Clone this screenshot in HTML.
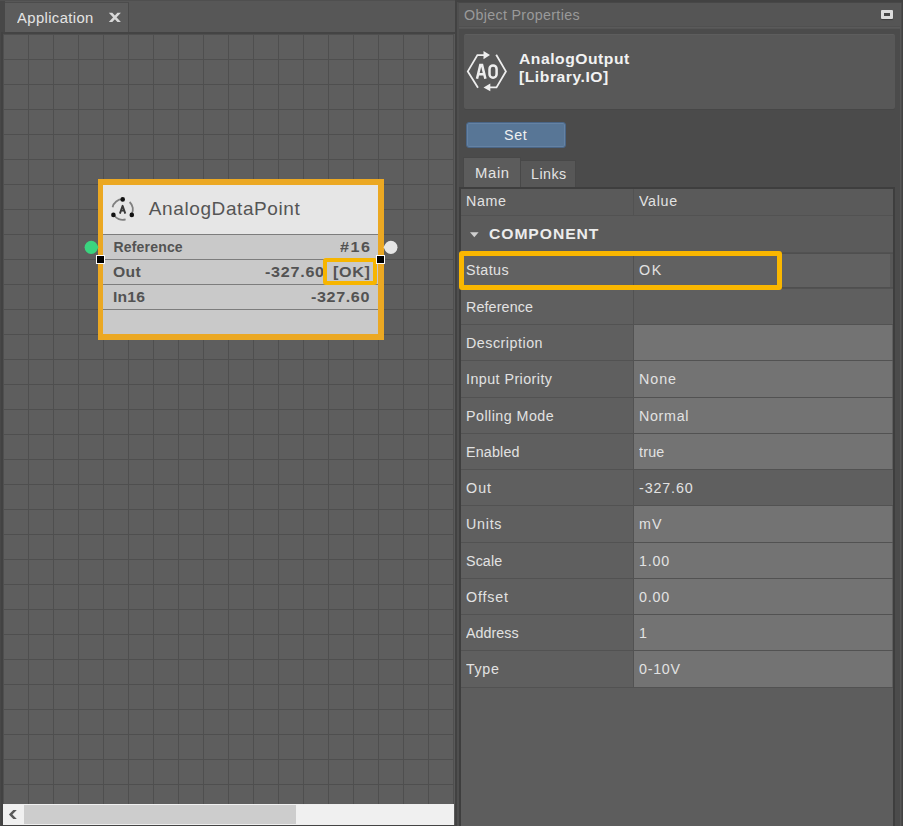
<!DOCTYPE html>
<html><head><meta charset="utf-8"><style>
*{margin:0;padding:0;box-sizing:border-box}
html,body{width:903px;height:826px;overflow:hidden;background:#474747;font-family:"Liberation Sans",sans-serif}
.a{position:absolute}
.t{position:absolute;white-space:pre;line-height:1}
</style></head><body>
<div class="a" style="left:0;top:0;width:456px;height:826px;background:#474747"></div>
<div class="a" style="left:0;top:0;width:456px;height:1px;background:#4f4f4f"></div>
<div class="a" style="left:5px;top:1px;width:451px;height:31px;background:#575757"></div>
<div class="a" style="left:5px;top:2px;width:124px;height:1px;background:#4c4c4c"></div>
<div class="a" style="left:5px;top:3px;width:124px;height:29px;background:#5c5c5c"></div>
<div class="a" style="left:128px;top:3px;width:1px;height:30px;background:#4a4a4a"></div>
<div class="t" style="left:16.5px;top:10.7px;font-size:14px;color:#e4e4e4;letter-spacing:0.35px;transform:scaleX(1.06);transform-origin:0 0;">Application</div>
<svg class="a" style="left:108px;top:12px" width="14" height="11" viewBox="0 0 14 11"><path d="M0.8 0.8 H4.3 L12.9 10 H9.4 Z M9.4 0.8 H12.9 L4.3 10 H0.8 Z" fill="#d8d8d8"/></svg>
<div class="a" style="left:3px;top:32px;width:453px;height:2px;background:#444"></div>
<div class="a" style="left:1px;top:32px;width:2px;height:794px;background:#424242"></div>
<div class="a" style="left:3px;top:34px;width:452px;height:770px;background-color:#5e5e5e;background-image:linear-gradient(#4f4f4f 1px,transparent 1px),linear-gradient(90deg,#4f4f4f 1px,transparent 1px);background-size:25px 25px;background-position:0 -25px,0 0"></div>
<div class="a" style="left:454px;top:34px;width:1px;height:791px;background:#5a5a5a"></div>
<div class="a" style="left:3px;top:804px;width:451px;height:21px;background:#f0f0f0"></div>
<div class="a" style="left:24px;top:805px;width:272px;height:19px;background:#cdcdcd"></div>
<svg class="a" style="left:8px;top:809px" width="10" height="11" viewBox="0 0 10 11"><path d="M5.3 1.1 H8.8 L4.4 5.5 L8.8 9.9 H5.3 L0.9 5.5 Z" fill="#5a5a5a"/></svg>
<div class="a" style="left:3px;top:825px;width:452px;height:1px;background:#444"></div>
<div class="a" style="left:98px;top:179px;width:286px;height:161px;background:#eba823"></div>
<div class="a" style="left:103px;top:185px;width:275px;height:49px;background:#e6e6e6"></div>
<div class="a" style="left:103px;top:234px;width:275px;height:25px;background:#c9c9c9;border-top:1px solid #7d7d7d"></div>
<div class="a" style="left:103px;top:259px;width:275px;height:25px;background:#c9c9c9;border-top:1px solid #7d7d7d"></div>
<div class="a" style="left:103px;top:284px;width:275px;height:25px;background:#c9c9c9;border-top:1px solid #7d7d7d"></div>
<div class="a" style="left:103px;top:309px;width:275px;height:25px;background:#c9c9c9;border-top:1px solid #7d7d7d"></div>
<svg class="a" style="left:108px;top:194px" width="30" height="30" viewBox="0 0 30 30">
<g fill="none" stroke="#808080" stroke-width="1.8">
<path d="M14.6 5.2 A10.3 10.3 0 0 0 4.57 13.18"/>
<path d="M23.52 20.65 A10.3 10.3 0 0 0 21.62 7.97"/>
<path d="M5.68 20.65 A10.3 10.3 0 0 0 17.61 25.35"/>
</g>
<circle cx="14.7" cy="5.4" r="2.3" fill="#111"/><circle cx="5.4" cy="20.9" r="2.3" fill="#111"/><circle cx="23.8" cy="20.9" r="2.3" fill="#111"/>
<path d="M11.9 19.6 L14.6 11.8 L17.3 19.6 M12.9 16.6 H16.3" fill="none" stroke="#3a3a3a" stroke-width="1.9" stroke-linejoin="round"/>
</svg>
<div class="t" style="left:148.8px;top:199.2px;font-size:19px;color:#555;letter-spacing:0.6px;">AnalogDataPoint</div>
<div class="t" style="left:113.5px;top:239.6px;font-size:14px;color:#535353;letter-spacing:0.18px;font-weight:bold;">Reference</div>
<div class="t" style="left:113.4px;top:264.6px;font-size:14px;color:#535353;letter-spacing:0.37px;font-weight:bold;transform:scaleX(1.12);transform-origin:0 0;">Out</div>
<div class="t" style="left:113.4px;top:289.6px;font-size:14px;color:#535353;letter-spacing:0.14px;font-weight:bold;transform:scaleX(1.12);transform-origin:0 0;">In16</div>
<div class="t" style="left:264.5px;top:264.6px;font-size:14px;color:#535353;letter-spacing:0.64px;font-weight:bold;transform:scaleX(1.15);transform-origin:0 0;">-327.60</div>
<div class="t" style="left:310.5px;top:289.6px;font-size:14px;color:#535353;letter-spacing:0.55px;font-weight:bold;transform:scaleX(1.15);transform-origin:0 0;">-327.60</div>
<div class="t" style="left:332.6px;top:264.6px;font-size:14px;color:#535353;letter-spacing:0.6px;font-weight:bold;transform:scaleX(1.15);transform-origin:0 0;">[OK]</div>
<div class="t" style="left:339.5px;top:239.6px;font-size:14px;color:#535353;letter-spacing:1.3px;font-weight:bold;transform:scaleX(1.15);transform-origin:0 0;">#16</div>
<div class="a" style="left:323px;top:258px;width:54px;height:27px;border:4px solid #f7b500;border-radius:3px"></div>
<svg class="a" style="left:82px;top:238px" width="20" height="20" viewBox="0 0 20 20"><circle cx="9.2" cy="9.3" r="6.6" fill="#3ad47f"/><path d="M13.5 5.3 L16.6 9.3 L13.5 13.3 Z" fill="#3ad47f"/></svg>
<svg class="a" style="left:381px;top:238px" width="20" height="20" viewBox="0 0 20 20"><circle cx="9.9" cy="9.3" r="6.6" fill="#e6e6e6"/><path d="M5.6 5.3 L2.4 9.3 L5.6 13.3 Z" fill="#e6e6e6"/></svg>
<div class="a" style="left:96px;top:255px;width:9px;height:9px;background:#000;border:1px solid #fff"></div>
<div class="a" style="left:376px;top:255px;width:9px;height:9px;background:#000;border:1px solid #fff"></div>
<div class="a" style="left:455px;top:0;width:448px;height:826px;background:#424242"></div>
<div class="a" style="left:457px;top:2px;width:445px;height:824px;background:#4b4b4b;border-left:2px solid #4f4f4f;border-top:1px solid #474747"></div>
<div class="a" style="left:459px;top:3px;width:441px;height:26px;background:#555"></div>
<div class="a" style="left:459px;top:26px;width:441px;height:1px;background:#505050"></div>
<div class="a" style="left:459px;top:27px;width:441px;height:1px;background:#5a5a5a"></div>
<div class="a" style="left:900px;top:3px;width:1px;height:823px;background:#575757"></div>
<div class="t" style="left:463.6px;top:7.8px;font-size:14px;color:#9a9a9a;letter-spacing:0.32px;transform:scaleX(1.02);transform-origin:0 0;">Object Properties</div>
<div class="a" style="left:881px;top:10px;width:12px;height:9px;border:3px solid #dcdcdc;border-radius:1px;background:#464646;box-shadow:0 1px 1px #3c3c3c"></div>
<div class="a" style="left:464px;top:34px;width:431px;height:75px;background:#585858;border-radius:2px;box-shadow:0 1px 0 #474747;border-top:1px solid #5d5d5d"></div>
<svg class="a" style="left:462px;top:46px" width="50" height="50" viewBox="0 0 50 50">
<g fill="none" stroke="#eeeeee" stroke-width="1.8">
<path d="M22.5 9.1 H15.4 L5.8 25.4 L16 41.8"/>
<path d="M34.2 8.8 L43.9 25.4 L34.5 41.4 H27.5"/>
<path d="M15 32.8 L18.3 19.1 H20.1 L23.4 32.8 M16.4 28.2 H22" stroke-width="2.5" stroke-linejoin="miter"/>
<rect x="27.5" y="19.4" width="7.1" height="12.3" rx="3.5" stroke-width="2.5"/>
</g>
<path d="M21.5 5 L28 9.1 L21.5 13.2 Z" fill="#eeeeee"/>
<path d="M28.3 37.6 L21.5 41.4 L28.3 45.2 Z" fill="#eeeeee"/>
</svg>
<div class="t" style="left:519.0px;top:51.7px;font-size:14px;color:#f2f2f2;letter-spacing:0.47px;font-weight:bold;transform:scaleX(1.12);transform-origin:0 0;">AnalogOutput</div>
<div class="t" style="left:518.6px;top:69.9px;font-size:14px;color:#f2f2f2;letter-spacing:0.48px;font-weight:bold;transform:scaleX(1.12);transform-origin:0 0;">[Library.IO]</div>
<div class="a" style="left:466px;top:122px;width:100px;height:26px;background:#587696;border-radius:3px;border:1px solid #4a6687;box-shadow:inset 0 0 0 1px #6582a3"></div>
<div class="t" style="left:504.2px;top:128.0px;font-size:14px;color:#f0f0f0;letter-spacing:0.69px;transform:scaleX(1.02);transform-origin:0 0;">Set</div>
<div class="a" style="left:463px;top:157px;width:58px;height:31px;background:#5c5c5c;border:1px solid #484848;border-bottom:none"></div>
<div class="a" style="left:521px;top:160px;width:55px;height:28px;background:#575757;border:1px solid #484848;border-bottom:none;border-left:none"></div>
<div class="t" style="left:474.6px;top:165.7px;font-size:14px;color:#e4e4e4;letter-spacing:0.6px;transform:scaleX(1.06);transform-origin:0 0;">Main</div>
<div class="t" style="left:531.0px;top:166.9px;font-size:14px;color:#e4e4e4;letter-spacing:0.44px;transform:scaleX(1.02);transform-origin:0 0;">Links</div>
<div class="a" style="left:459px;top:187px;width:436px;height:639px;background:#3e3e3e"></div>
<div class="a" style="left:461px;top:189px;width:432px;height:637px;background:#5d5d5d"></div>
<div class="a" style="left:461px;top:189px;width:432px;height:26px;background:#5a5a5a"></div>
<div class="t" style="left:465.7px;top:194.3px;font-size:14px;color:#e2e2e2;letter-spacing:0.58px;transform:scaleX(1.02);transform-origin:0 0;">Name</div>
<div class="t" style="left:639.2px;top:194.4px;font-size:14px;color:#e2e2e2;letter-spacing:0.64px;transform:scaleX(1.02);transform-origin:0 0;">Value</div>
<div class="a" style="left:633px;top:189px;width:1px;height:26px;background:#525252"></div>
<div class="a" style="left:461px;top:215px;width:432px;height:1px;background:#525252"></div>
<div class="a" style="left:461px;top:216px;width:432px;height:36px;background:#5b5b5b"></div>
<svg class="a" style="left:470px;top:232px" width="9" height="6"><path d="M0 0.3 H8.6 L4.3 5.3 Z" fill="#d0d0d0"/></svg>
<div class="t" style="left:489.4px;top:226.7px;font-size:14px;color:#ececec;letter-spacing:0.83px;font-weight:bold;transform:scaleX(1.12);transform-origin:0 0;">COMPONENT</div>
<div class="a" style="left:461px;top:252px;width:432px;height:1px;background:#525252"></div>
<div class="a" style="left:461px;top:253px;width:432px;height:35px;background:#616161"></div>
<div class="a" style="left:633px;top:253px;width:1px;height:35px;background:#525252"></div>
<div class="t" style="left:465.7px;top:262.8px;font-size:14px;color:#e2e2e2;letter-spacing:0.4px;transform:scaleX(1.02);transform-origin:0 0;">Status</div>
<div class="t" style="left:638.8px;top:262.8px;font-size:14px;color:#e2e2e2;letter-spacing:1.5px;transform:scaleX(1.02);transform-origin:0 0;">OK</div>
<div class="a" style="left:461px;top:288px;width:432px;height:1px;background:#525252"></div>
<div class="a" style="left:461px;top:289px;width:432px;height:35px;background:#5f5f5f"></div>
<div class="a" style="left:633px;top:289px;width:1px;height:35px;background:#525252"></div>
<div class="t" style="left:466.2px;top:299.5px;font-size:14px;color:#e2e2e2;letter-spacing:0.13px;transform:scaleX(1.02);transform-origin:0 0;">Reference</div>
<div class="a" style="left:461px;top:324px;width:432px;height:1px;background:#525252"></div>
<div class="a" style="left:461px;top:325px;width:432px;height:35px;background:#5f5f5f"></div>
<div class="a" style="left:634px;top:325px;width:258px;height:35px;background:#737373"></div>
<div class="a" style="left:633px;top:325px;width:1px;height:35px;background:#525252"></div>
<div class="t" style="left:466.2px;top:335.5px;font-size:14px;color:#e2e2e2;letter-spacing:0.5px;transform:scaleX(1.02);transform-origin:0 0;">Description</div>
<div class="a" style="left:461px;top:360px;width:432px;height:1px;background:#525252"></div>
<div class="a" style="left:461px;top:361px;width:432px;height:36px;background:#5f5f5f"></div>
<div class="a" style="left:634px;top:361px;width:258px;height:36px;background:#737373"></div>
<div class="a" style="left:633px;top:361px;width:1px;height:36px;background:#525252"></div>
<div class="t" style="left:466.2px;top:371.5px;font-size:14px;color:#e2e2e2;letter-spacing:0.44px;transform:scaleX(1.02);transform-origin:0 0;">Input Priority</div>
<div class="t" style="left:638.8px;top:371.5px;font-size:14px;color:#e2e2e2;letter-spacing:0.93px;transform:scaleX(1.02);transform-origin:0 0;">None</div>
<div class="a" style="left:461px;top:397px;width:432px;height:1px;background:#525252"></div>
<div class="a" style="left:461px;top:398px;width:432px;height:35px;background:#5f5f5f"></div>
<div class="a" style="left:634px;top:398px;width:258px;height:35px;background:#737373"></div>
<div class="a" style="left:633px;top:398px;width:1px;height:35px;background:#525252"></div>
<div class="t" style="left:466.2px;top:408.5px;font-size:14px;color:#e2e2e2;letter-spacing:0.46px;transform:scaleX(1.02);transform-origin:0 0;">Polling Mode</div>
<div class="t" style="left:638.8px;top:408.5px;font-size:14px;color:#e2e2e2;letter-spacing:0.67px;transform:scaleX(1.02);transform-origin:0 0;">Normal</div>
<div class="a" style="left:461px;top:433px;width:432px;height:1px;background:#525252"></div>
<div class="a" style="left:461px;top:434px;width:432px;height:35px;background:#5f5f5f"></div>
<div class="a" style="left:634px;top:434px;width:258px;height:35px;background:#737373"></div>
<div class="a" style="left:633px;top:434px;width:1px;height:35px;background:#525252"></div>
<div class="t" style="left:466.2px;top:444.5px;font-size:14px;color:#e2e2e2;letter-spacing:0.18px;transform:scaleX(1.02);transform-origin:0 0;">Enabled</div>
<div class="t" style="left:638.8px;top:444.5px;font-size:14px;color:#e2e2e2;letter-spacing:0.2px;transform:scaleX(1.02);transform-origin:0 0;">true</div>
<div class="a" style="left:461px;top:469px;width:432px;height:1px;background:#525252"></div>
<div class="a" style="left:461px;top:470px;width:432px;height:35px;background:#5f5f5f"></div>
<div class="a" style="left:633px;top:470px;width:1px;height:35px;background:#525252"></div>
<div class="t" style="left:465.7px;top:480.5px;font-size:14px;color:#e2e2e2;letter-spacing:1.0px;transform:scaleX(1.02);transform-origin:0 0;">Out</div>
<div class="t" style="left:638.8px;top:480.5px;font-size:14px;color:#e2e2e2;letter-spacing:0.86px;transform:scaleX(1.02);transform-origin:0 0;">-327.60</div>
<div class="a" style="left:461px;top:505px;width:432px;height:1px;background:#525252"></div>
<div class="a" style="left:461px;top:506px;width:432px;height:36px;background:#5f5f5f"></div>
<div class="a" style="left:634px;top:506px;width:258px;height:36px;background:#737373"></div>
<div class="a" style="left:633px;top:506px;width:1px;height:36px;background:#525252"></div>
<div class="t" style="left:465.7px;top:516.5px;font-size:14px;color:#e2e2e2;letter-spacing:0.73px;transform:scaleX(1.02);transform-origin:0 0;">Units</div>
<div class="t" style="left:638.8px;top:516.5px;font-size:14px;color:#e2e2e2;letter-spacing:1.2px;transform:scaleX(1.02);transform-origin:0 0;">mV</div>
<div class="a" style="left:461px;top:542px;width:432px;height:1px;background:#525252"></div>
<div class="a" style="left:461px;top:543px;width:432px;height:35px;background:#5f5f5f"></div>
<div class="a" style="left:634px;top:543px;width:258px;height:35px;background:#737373"></div>
<div class="a" style="left:633px;top:543px;width:1px;height:35px;background:#525252"></div>
<div class="t" style="left:465.7px;top:553.5px;font-size:14px;color:#e2e2e2;letter-spacing:0.1px;transform:scaleX(1.02);transform-origin:0 0;">Scale</div>
<div class="t" style="left:638.8px;top:553.5px;font-size:14px;color:#e2e2e2;letter-spacing:0.8px;transform:scaleX(1.02);transform-origin:0 0;">1.00</div>
<div class="a" style="left:461px;top:578px;width:432px;height:1px;background:#525252"></div>
<div class="a" style="left:461px;top:579px;width:432px;height:35px;background:#5f5f5f"></div>
<div class="a" style="left:634px;top:579px;width:258px;height:35px;background:#737373"></div>
<div class="a" style="left:633px;top:579px;width:1px;height:35px;background:#525252"></div>
<div class="t" style="left:465.7px;top:589.5px;font-size:14px;color:#e2e2e2;letter-spacing:0.8px;transform:scaleX(1.02);transform-origin:0 0;">Offset</div>
<div class="t" style="left:638.8px;top:589.5px;font-size:14px;color:#e2e2e2;letter-spacing:0.8px;transform:scaleX(1.02);transform-origin:0 0;">0.00</div>
<div class="a" style="left:461px;top:614px;width:432px;height:1px;background:#525252"></div>
<div class="a" style="left:461px;top:615px;width:432px;height:35px;background:#5f5f5f"></div>
<div class="a" style="left:634px;top:615px;width:258px;height:35px;background:#737373"></div>
<div class="a" style="left:633px;top:615px;width:1px;height:35px;background:#525252"></div>
<div class="t" style="left:465.7px;top:625.5px;font-size:14px;color:#e2e2e2;letter-spacing:0.05px;transform:scaleX(1.02);transform-origin:0 0;">Address</div>
<div class="t" style="left:638.8px;top:625.5px;font-size:14px;color:#e2e2e2;letter-spacing:0px;transform:scaleX(1.02);transform-origin:0 0;">1</div>
<div class="a" style="left:461px;top:650px;width:432px;height:1px;background:#525252"></div>
<div class="a" style="left:461px;top:651px;width:432px;height:36px;background:#5f5f5f"></div>
<div class="a" style="left:634px;top:651px;width:258px;height:36px;background:#737373"></div>
<div class="a" style="left:633px;top:651px;width:1px;height:36px;background:#525252"></div>
<div class="t" style="left:465.7px;top:661.5px;font-size:14px;color:#e2e2e2;letter-spacing:0.62px;transform:scaleX(1.02);transform-origin:0 0;">Type</div>
<div class="t" style="left:638.8px;top:661.5px;font-size:14px;color:#e2e2e2;letter-spacing:0.7px;transform:scaleX(1.02);transform-origin:0 0;">0-10V</div>
<div class="a" style="left:461px;top:687px;width:432px;height:1px;background:#525252"></div>
<div class="a" style="left:890px;top:253px;width:3px;height:35px;background:#575757"></div>
<div class="a" style="left:461px;top:253px;width:432px;height:1px;background:#4f4f4f"></div>
<div class="a" style="left:461px;top:287px;width:432px;height:1px;background:#4f4f4f"></div>
<div class="a" style="left:459px;top:251px;width:323px;height:39px;border:5px solid #fab700;border-radius:3px"></div>
</body></html>
